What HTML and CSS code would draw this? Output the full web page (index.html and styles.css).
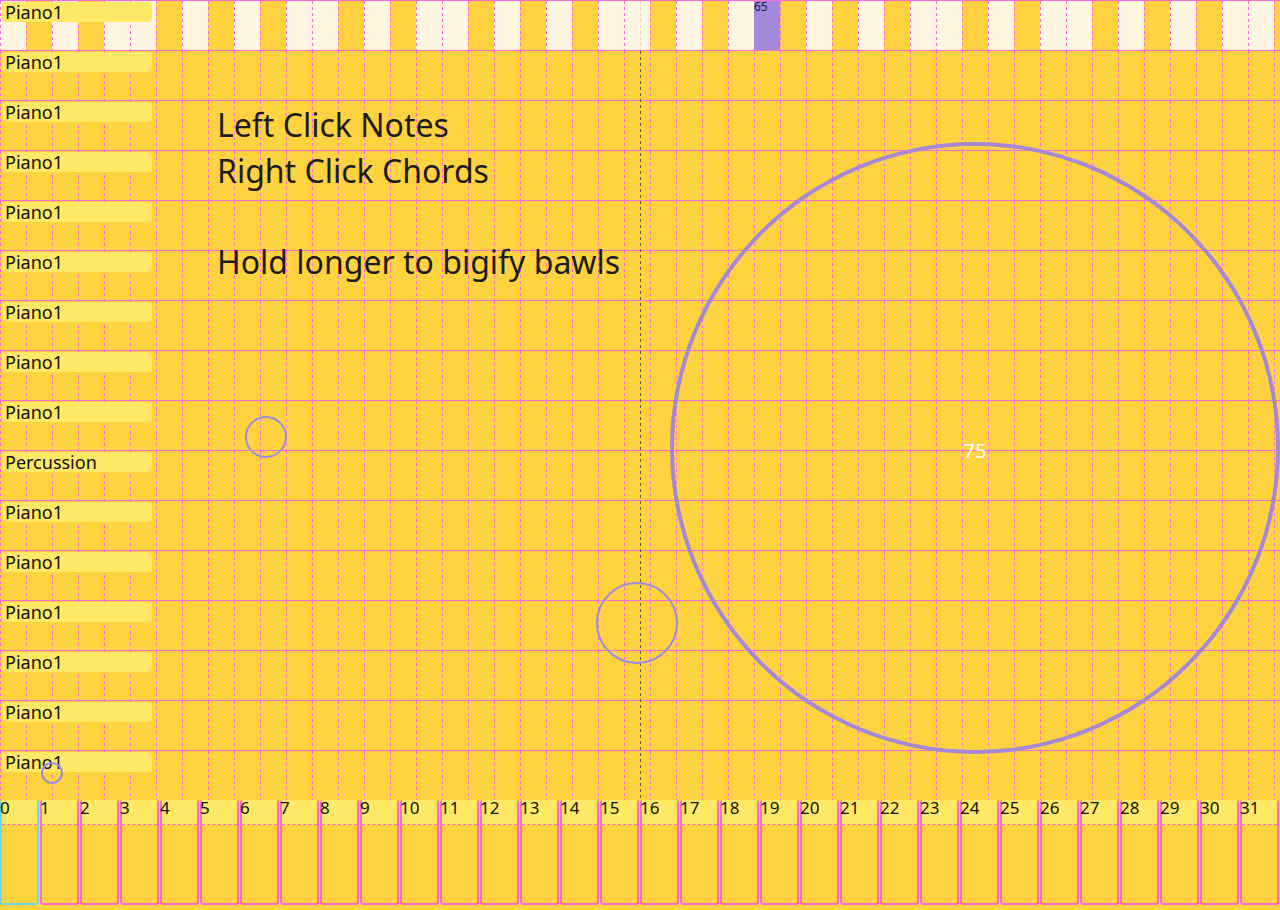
FILE: index.html
```html
<!DOCTYPE html>
<html>
<head>
<meta charset="utf-8">
<link rel="stylesheet" href="styles.css">
</head>
<body>
<div class="app">
  <div class="tracks">
    <div class="track">
      <div class="keys">
        <div class="key w"></div><div class="key b"></div><div class="key w"></div><div class="key b"></div><div class="key w"></div><div class="key w"></div><div class="key b"></div><div class="key w"></div><div class="key b"></div><div class="key w"></div><div class="key b"></div><div class="key w"></div>
        <div class="key w"></div><div class="key b"></div><div class="key w"></div><div class="key b"></div><div class="key w"></div><div class="key w"></div><div class="key b"></div><div class="key w"></div><div class="key b"></div><div class="key w"></div><div class="key b"></div><div class="key w"></div>
        <div class="key w"></div><div class="key b"></div><div class="key w"></div><div class="key b"></div><div class="key w"></div><div class="key on">65</div><div class="key b"></div><div class="key w"></div><div class="key b"></div><div class="key w"></div><div class="key b"></div><div class="key w"></div>
        <div class="key w"></div><div class="key b"></div><div class="key w"></div><div class="key b"></div><div class="key w"></div><div class="key w"></div><div class="key b"></div><div class="key w"></div><div class="key b"></div><div class="key w"></div><div class="key b"></div><div class="key w"></div>
        <div class="key w"></div><div class="key b"></div>
      </div>
      <div class="label">Piano1</div>
    </div>
    <div class="track"><div class="label">Piano1</div></div>
    <div class="track"><div class="label">Piano1</div></div>
    <div class="track"><div class="label">Piano1</div></div>
    <div class="track"><div class="label">Piano1</div></div>
    <div class="track"><div class="label">Piano1</div></div>
    <div class="track"><div class="label">Piano1</div></div>
    <div class="track"><div class="label">Piano1</div></div>
    <div class="track"><div class="label">Piano1</div></div>
    <div class="track"><div class="label">Percussion</div></div>
    <div class="track"><div class="label">Piano1</div></div>
    <div class="track"><div class="label">Piano1</div></div>
    <div class="track"><div class="label">Piano1</div></div>
    <div class="track"><div class="label">Piano1</div></div>
    <div class="track"><div class="label">Piano1</div></div>
    <div class="track"><div class="label">Piano1</div></div>
  </div>
  <div class="bar">
    <div class="cell sel"><div class="head"><span class="num">0</span></div></div>
    <div class="cell"><div class="head"><span class="num">1</span></div></div>
    <div class="cell"><div class="head"><span class="num">2</span></div></div>
    <div class="cell"><div class="head"><span class="num">3</span></div></div>
    <div class="cell"><div class="head"><span class="num">4</span></div></div>
    <div class="cell"><div class="head"><span class="num">5</span></div></div>
    <div class="cell"><div class="head"><span class="num">6</span></div></div>
    <div class="cell"><div class="head"><span class="num">7</span></div></div>
    <div class="cell"><div class="head"><span class="num">8</span></div></div>
    <div class="cell"><div class="head"><span class="num">9</span></div></div>
    <div class="cell"><div class="head"><span class="num">10</span></div></div>
    <div class="cell"><div class="head"><span class="num">11</span></div></div>
    <div class="cell"><div class="head"><span class="num">12</span></div></div>
    <div class="cell"><div class="head"><span class="num">13</span></div></div>
    <div class="cell"><div class="head"><span class="num">14</span></div></div>
    <div class="cell"><div class="head"><span class="num">15</span></div></div>
    <div class="cell"><div class="head"><span class="num">16</span></div></div>
    <div class="cell"><div class="head"><span class="num">17</span></div></div>
    <div class="cell"><div class="head"><span class="num">18</span></div></div>
    <div class="cell"><div class="head"><span class="num">19</span></div></div>
    <div class="cell"><div class="head"><span class="num">20</span></div></div>
    <div class="cell"><div class="head"><span class="num">21</span></div></div>
    <div class="cell"><div class="head"><span class="num">22</span></div></div>
    <div class="cell"><div class="head"><span class="num">23</span></div></div>
    <div class="cell"><div class="head"><span class="num">24</span></div></div>
    <div class="cell"><div class="head"><span class="num">25</span></div></div>
    <div class="cell"><div class="head"><span class="num">26</span></div></div>
    <div class="cell"><div class="head"><span class="num">27</span></div></div>
    <div class="cell"><div class="head"><span class="num">28</span></div></div>
    <div class="cell"><div class="head"><span class="num">29</span></div></div>
    <div class="cell"><div class="head"><span class="num">30</span></div></div>
    <div class="cell"><div class="head"><span class="num">31</span></div></div>
  </div>

  <div class="center-line faint"></div>
  <div class="center-line"></div>

  <div class="help">
    <div>Left Click Notes</div>
    <div>Right Click Chords</div>
    <div class="blank"></div>
    <div>Hold longer to bigify bawls</div>
  </div>

  <div class="ball b1"></div>
  <div class="ball b2"></div>
  <div class="ball b3"></div>
  <div class="ball big">75</div>
</div>
</body>
</html>
```
FILE: styles.css
```css
* { box-sizing: border-box; }
html, body { margin: 0; padding: 0; }
body {
  background: #FFD240;
  font-family: "Noto Sans", "Open Sans", sans-serif;
  width: 1280px;
  height: 910px;
  overflow: hidden;
}
.app { position: relative; width: 1280px; height: 910px; }

.tracks { display: flex; flex-direction: column; }
.track {
  height: 50px;
  border-top: 1px solid #FF6AD0;
  background-image: conic-gradient(at 1px 3px, transparent 75%, #FF6AD6 0);
  background-size: 26px 6px;
  display: grid;
}
.keys {
  grid-area: 1 / 1;
  display: flex;
  overflow: hidden;
  height: 49px;
  width: 1280px;
}
.key { flex: 0 0 26px; height: 49px; }
.key.w {
  background: conic-gradient(at 1px 3px, transparent 75%, #FF6AD6 0) 0 0 / 26px 6px, #FFF6E1;
}
.key.b { background: transparent; }
.key.on {
  background: #A488D9;
  font-size: 12px;
  line-height: 12px;
  color: #1b1b3a;
}
.label {
  grid-area: 1 / 1;
  align-self: start;
  justify-self: start;
  width: 150px;
  height: 20px;
  margin: 1px 0 0 2px;
  padding-left: 3px;
  background: #FFE866;
  border-radius: 4px;
  font-size: 18px;
  line-height: 20px;
  color: #111;
  white-space: nowrap;
}

.bar { display: flex; height: 110px; }
.cell {
  flex: 0 0 39px;
  margin-right: 1px;
  height: 105px;
  border: 2px solid #FF6AD0;
  border-radius: 3px;
}
.cell.sel { border-color: #6AD8EE; }
.head {
  height: 25px;
  background: #FFE866;
  border-bottom: 1px dashed #FF6AD0;
}
.num {
  display: block;
  margin: -2px 0 0 -2px;
  font-size: 17px;
  line-height: 16px;
  color: #111;
}

.center-line {
  position: absolute;
  left: 640px;
  top: 51px;
  width: 1px;
  height: 749px;
  background: linear-gradient(#6b5a2a 3px, transparent 3px) 0 0 / 1px 6px;
}
.center-line.faint {
  top: 1px;
  height: 49px;
  background: linear-gradient(#e0d6c0 3px, transparent 3px) 0 0 / 1px 6px;
}

.help {
  position: absolute;
  left: 217px;
  top: 102px;
  font-size: 32px;
  line-height: 45.5px;
  color: #1c1c1c;
  white-space: nowrap;
}
.blank { height: 45.5px; }

.ball {
  position: absolute;
  border-radius: 50%;
  border: 2px solid #9A8CE0;
}
.b1 { left: 245px; top: 416px; width: 42px; height: 42px; }
.b2 { left: 596px; top: 582px; width: 82px; height: 82px; }
.b3 { left: 41px; top: 762px; width: 22px; height: 22px; }
.big {
  left: 670px;
  top: 142px;
  width: 610px;
  height: 612px;
  border: 4px solid #A688D9;
  padding-top: 4px;
  display: flex;
  align-items: center;
  justify-content: center;
  color: #fff;
  font-size: 20px;
}
```
